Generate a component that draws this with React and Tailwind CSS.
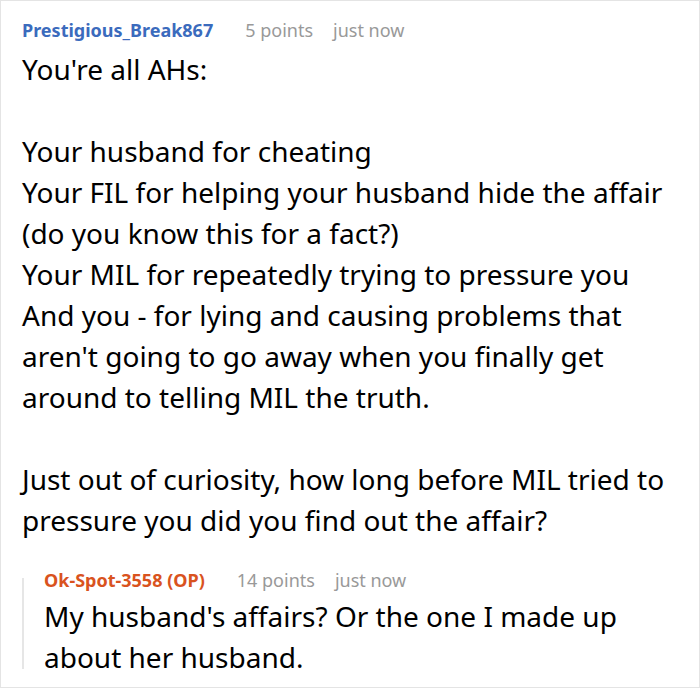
export default function App() {
  const body = [
    "You're all AHs:",
    "",
    "Your husband for cheating",
    "Your FIL for helping your husband hide the affair",
    "(do you know this for a fact?)",
    "Your MIL for repeatedly trying to pressure you",
    "And you - for lying and causing problems that",
    "aren't going to go away when you finally get",
    "around to telling MIL the truth.",
    "",
    "Just out of curiosity, how long before MIL tried to",
    "pressure you did you find out the affair?",
  ];

  return (
    <div
      className="w-[700px] h-[688px] bg-white border border-[#e4e4e4] overflow-hidden"
      style={{ fontFamily: '"Noto Sans", sans-serif' }}
    >
      <div className="pl-[21px] pt-[17px]">
        <div className="flex items-center h-[24px] text-[18px]">
          <span className="font-bold text-[#3b6bbd]">Prestigious_Break867</span>
          <span className="ml-[32px] text-[#999999]">5 points</span>
          <span className="ml-[20px] text-[#999999]">just now</span>
        </div>
        <div className="mt-[7px] text-[28px] leading-[41px] text-black">
          {body.map((line, i) => (
            <div key={i} className="h-[41px] whitespace-nowrap">
              {line}
            </div>
          ))}
        </div>

        <div className="mt-[27px] flex">
          <div className="w-[2px] bg-[#e6e6e6] mt-[10px] mb-[9px]" />
          <div className="pl-[20px]">
            <div className="flex items-center h-[24px] text-[18px]">
              <span className="font-bold text-[#d9531e]">Ok-Spot-3558 (OP)</span>
              <span className="ml-[32px] text-[#999999]">14 points</span>
              <span className="ml-[20px] text-[#999999]">just now</span>
            </div>
            <div className="mt-[4px] text-[28px] leading-[41px] text-black">
              <div className="h-[41px] whitespace-nowrap">
                My husband's affairs? Or the one I made up
              </div>
              <div className="h-[41px] whitespace-nowrap">about her husband.</div>
            </div>
          </div>
        </div>
      </div>
    </div>
  );
}
